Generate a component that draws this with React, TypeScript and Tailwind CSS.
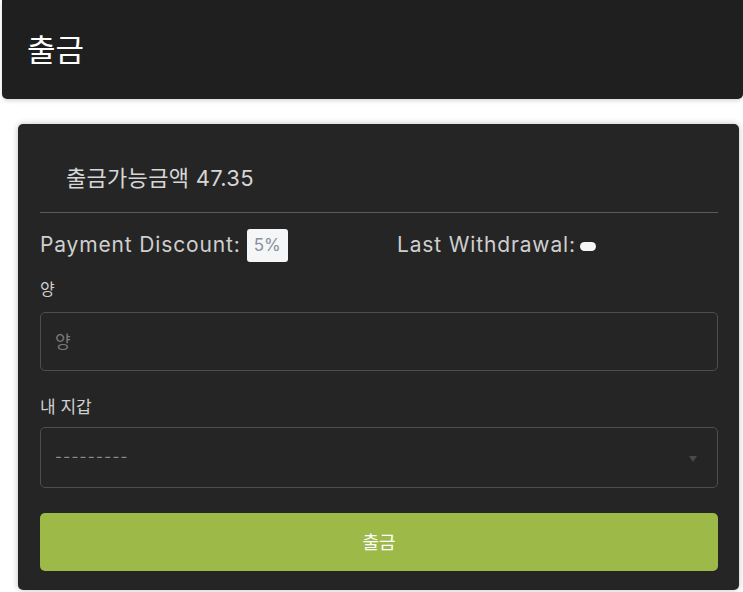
export default function App() {
  const latin = "font-['Inter','Noto_Sans_CJK_KR',sans-serif]";
  return (
    <div className={`min-h-[592px] w-[743px] overflow-hidden bg-white ${latin}`}>
      <header className="ml-[2px] flex h-[99px] items-center rounded-b-[5px] bg-[#1f1f1f] pl-[25px] shadow-[0_2px_4px_rgba(0,0,0,0.15)]">
        <h1 className="text-[31px] leading-none text-white">출금</h1>
      </header>

      <section className="ml-[18px] mr-[4px] mt-[25px] h-[466px] rounded-[5px] bg-[#252525] px-[22px] pr-[21px] shadow-[0_0_6px_rgba(0,0,0,0.25)]">
        <div className="flex h-[89px] items-center border-b border-[#5a5a5a] pl-[26px] pt-[20px]">
          <span className="text-[22px] tracking-[0.3px] text-[#d6d6d6]">출금가능금액 47.35</span>
        </div>

        <div className="grid h-[64px] grid-cols-[357px_1fr] items-center">
          <div className="flex items-center gap-[6px]">
            <span className="text-[21px] tracking-[0.85px] text-[#cfcfcf]">Payment Discount:</span>
            <span className="rounded-[3px] bg-[#f5f6f8] px-[7px] py-[6px] text-[17px] leading-[21px] text-[#8a8f99]">5%</span>
          </div>
          <div className="flex items-center gap-[4px]">
            <span className="text-[21px] tracking-[0.85px] text-[#cfcfcf]">Last Withdrawal:</span>
            <span className="mt-[2px] h-[9px] w-[16px] rounded-full bg-[#f5f6f8]" />
          </div>
        </div>

        <label className="mt-[2px] block text-[16px] leading-[20px] text-[#cfcfcf]">양</label>
        <input
          placeholder="양"
          className="mt-[13px] block h-[59px] w-full rounded-[5px] border border-[#4e4e4e] bg-transparent px-[14px] text-[17px] text-[#cfcfcf] outline-none placeholder:text-[#7a7a7a]"
        />

        <label className="mt-[26px] block text-[17px] leading-[20px] text-[#cfcfcf]">내 지갑</label>
        <div className="mt-[10px] flex h-[61px] w-full items-center justify-between rounded-[5px] border border-[#4e4e4e] pl-[14px] pr-[20px]">
          <span className="text-[15px] tracking-[1.3px] text-[#8c8c8c]">---------</span>
          <svg width="8" height="6" viewBox="0 0 8 6" className="mt-[2px]">
            <path d="M0 0 L8 0 L4 6 Z" fill="#4a4a4a" />
          </svg>
        </div>

        <button className="mt-[25px] flex h-[58px] w-full items-center justify-center rounded-[5px] bg-[#9db948] text-[18px] text-white">
          출금
        </button>
      </section>
    </div>
  );
}
